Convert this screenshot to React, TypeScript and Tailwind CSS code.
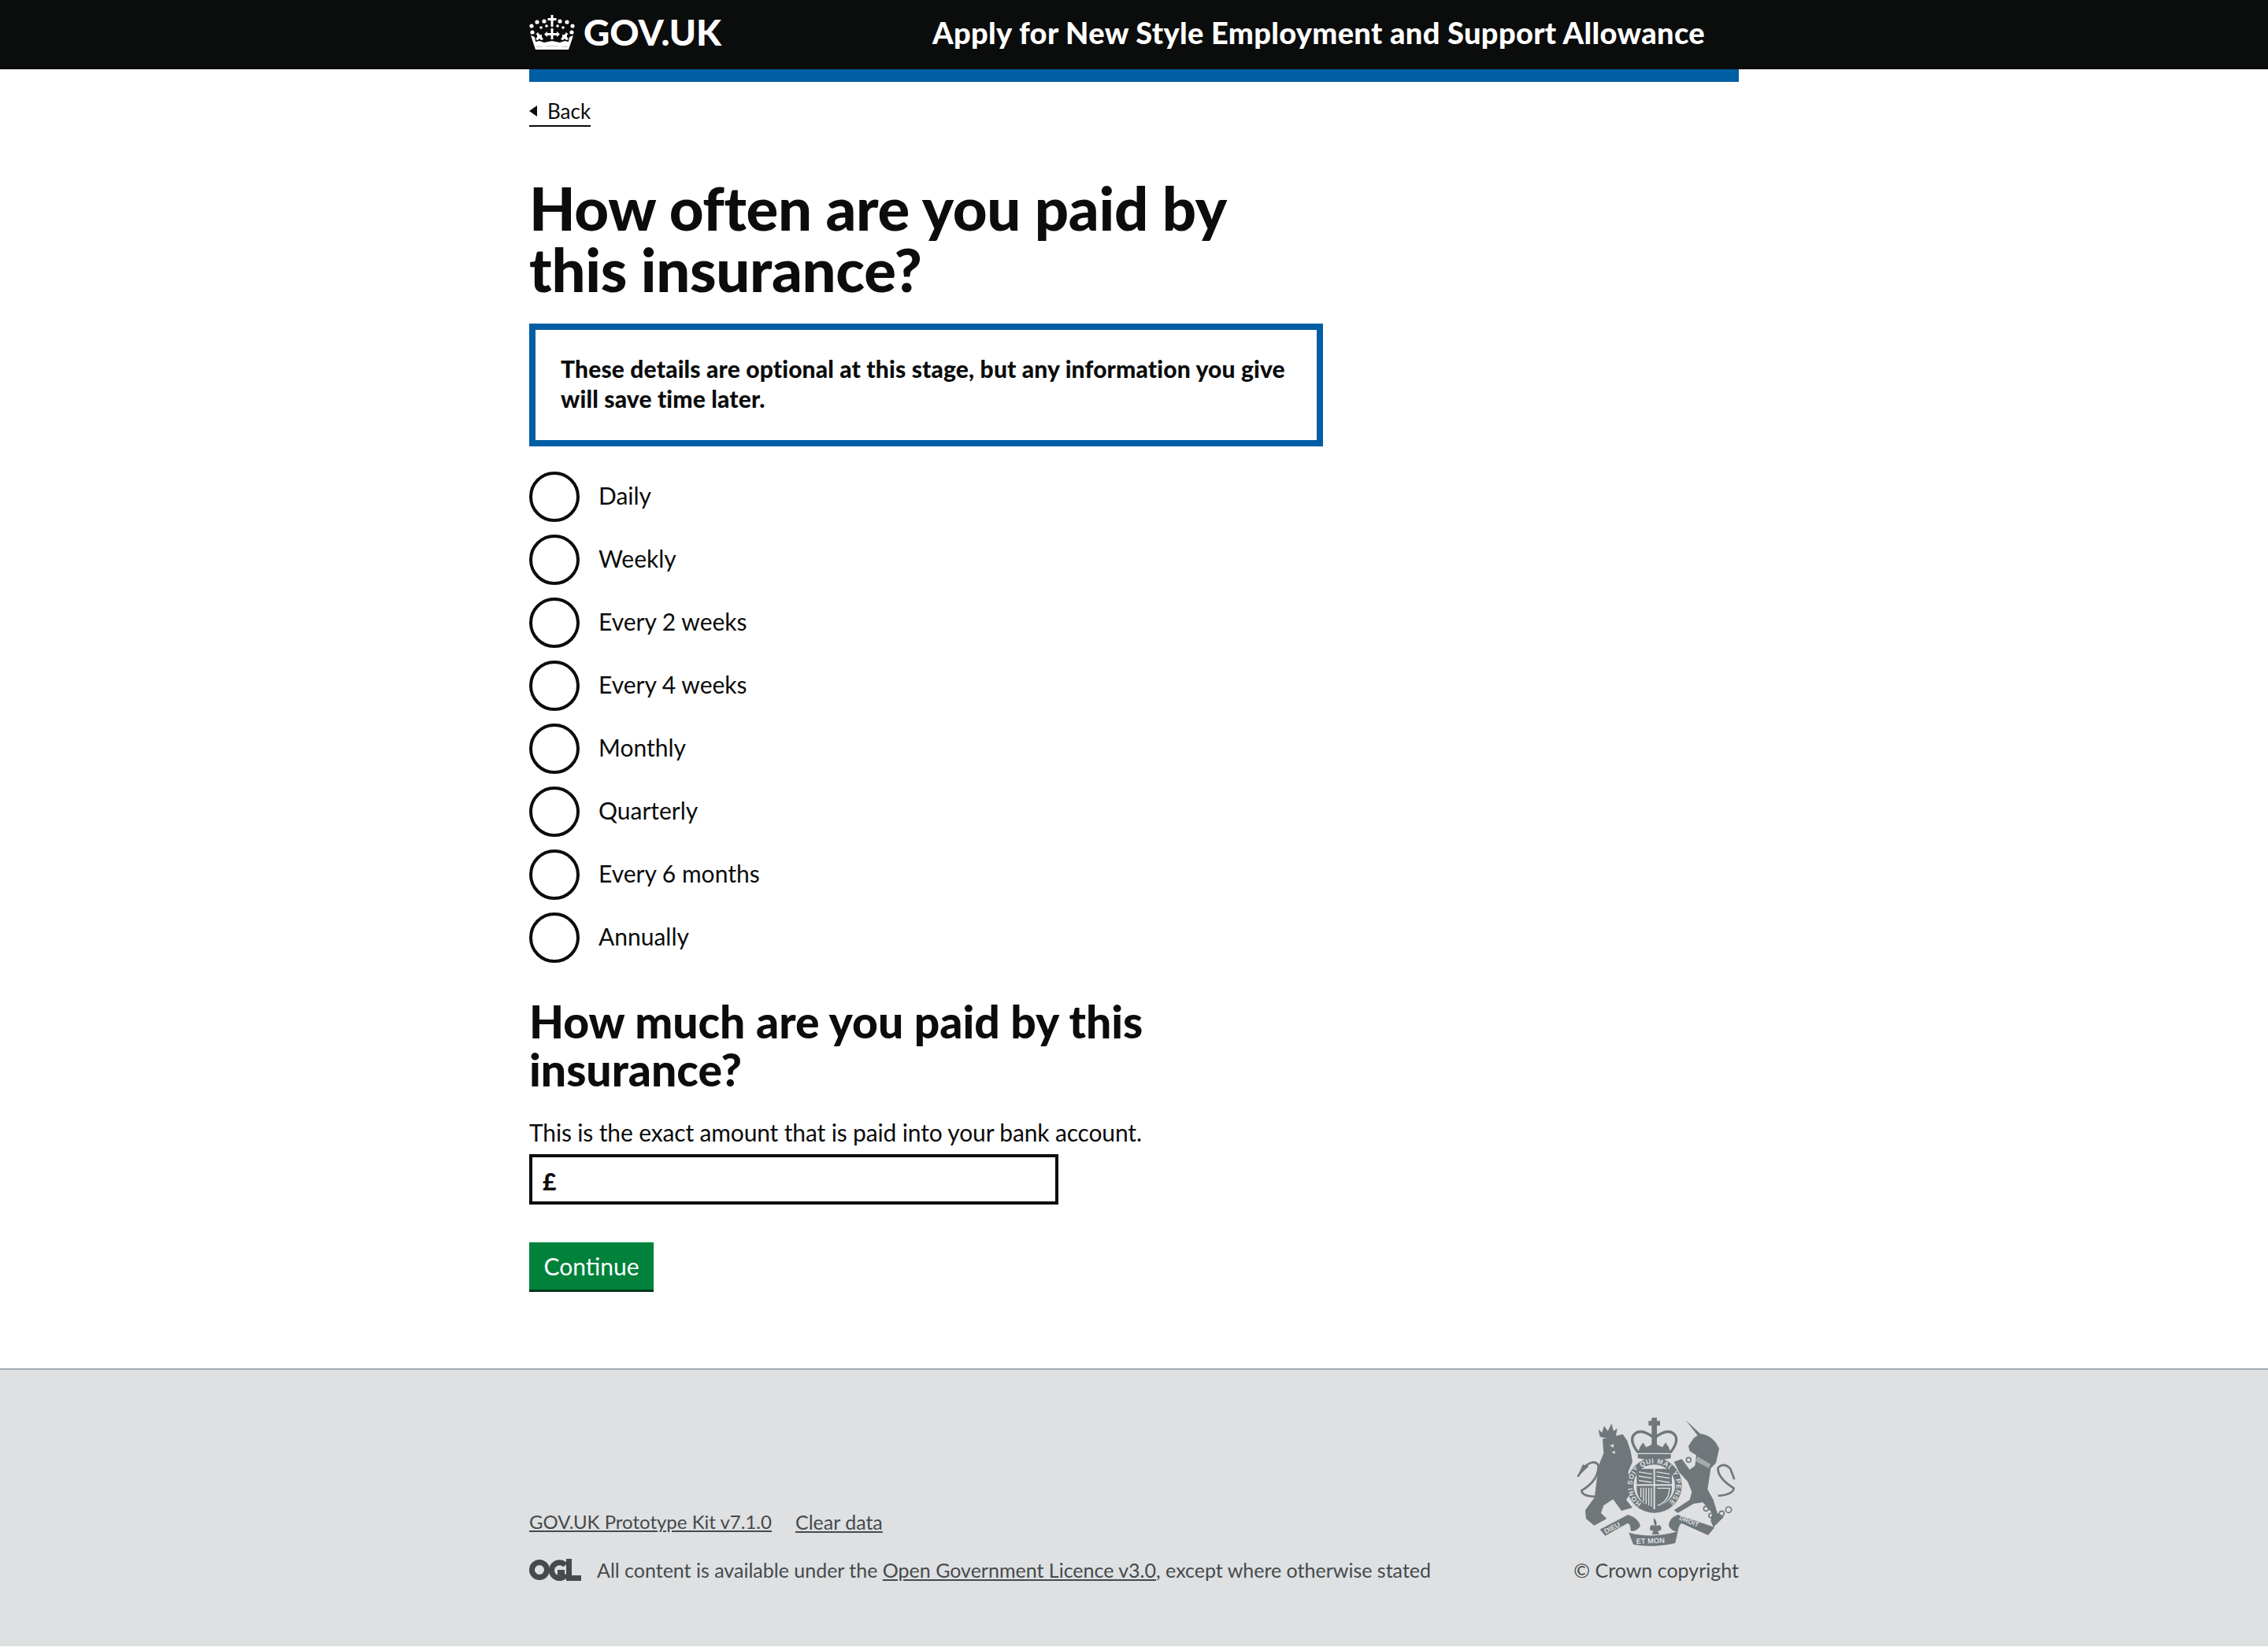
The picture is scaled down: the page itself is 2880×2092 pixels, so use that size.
import React from 'react';

const options = ['Daily', 'Weekly', 'Every 2 weeks', 'Every 4 weeks', 'Monthly', 'Quarterly', 'Every 6 months', 'Annually'];

function CrownLogo() {
  return (
    <svg viewBox="0 0 58 44" className="w-[58px] h-[44px] fill-white">
      <circle cx="3" cy="14" r="2.6" /><circle cx="10" cy="9" r="2.6" /><circle cx="19" cy="8" r="2.6" />
      <circle cx="39" cy="8" r="2.6" /><circle cx="48" cy="9" r="2.6" /><circle cx="55" cy="14" r="2.6" />
      <path d="M27.5 0h3v4h4v3h-4v8h-3V7h-4V4h4z" />
      <circle cx="22" cy="14" r="1.8" /><circle cx="36" cy="14" r="1.8" />
      <circle cx="4" cy="22" r="2.6" /><circle cx="54" cy="22" r="2.6" />
      <circle cx="15" cy="16" r="1.8" /><circle cx="43" cy="16" r="1.8" />
      <path d="M27.5 17h3v6h4.5v-2l4 3.500-4 3.500v-2h-4.500v5h-3v-5H23v2l-4-3.500 4-3.500v2h4.500z" />
      <path d="M11 22l2 3h3v3l2 3-3 1-2-2-2 2-3-1 2-3v-3h-2z" />
      <path d="M47 22l-2 3h-3v3l-2 3 3 1 2-2 2 2 3-1-2-3v-3h2z" />
      <path d="M2 26l5 2 1 6 5-1 6 2 10-2 10 2 6-2 5 1 1-6 5-2-5 15q-22-3-44 0z" />
      <path d="M7 41q22-3 44 0l-1 3H8z" />
    </svg>
  );
}

function Crest() {
  const c = '#6f777b';
  const bg = '#dee0e2';
  return (
    <svg viewBox="130 125 604 492" className="w-[202px] h-[164px]">
      {/* lion */}
      <path d="M228 208L305 190L322 215L335 255L342 295L325 335L345 400L318 440L342 470L300 482L268 438L232 462L222 490L244 512L196 538L165 512L162 480L198 430L205 370L215 305L232 262Z" fill={c} />
      <path d="M218 200L212 172L226 184L234 158L248 178L262 150L270 178L284 168L278 200Q248 210 218 200Z" fill={c} />
      <path d="M208 428Q150 428 148 405Q215 365 212 308Q195 282 155 318L134 352" fill="none" stroke={c} strokeWidth="8" />
      <path d="M132 354L152 306L176 312Z" fill={c} />
      <path d="M256 232l16-4-4 14zM262 258l14-4-2 12z" fill={bg} />

      {/* unicorn */}
      <path d="M545 137L600 188Q650 195 672 245L660 300L640 320L628 400L650 440L665 490L690 505L650 545L640 520L645 490L610 450L575 455L515 490L500 480L560 440L568 410L552 370L520 335L500 295L530 285L560 325L580 310L585 270L560 255L555 235L575 205L590 195Z" fill={c} />
      <path d="M668 425Q725 420 728 396Q664 355 668 318Q690 295 715 322L730 362" fill="none" stroke={c} strokeWidth="8" />
      <g fill="none" stroke={c} strokeWidth="5">
        <circle cx="708" cy="478" r="11" /><circle cx="682" cy="492" r="9" /><circle cx="642" cy="500" r="9" /><circle cx="622" cy="474" r="9" />
        <circle cx="556" cy="288" r="9" />
      </g>
      <path d="M590 275l50 30-8 14-50-26z" fill={bg} opacity="0.5" />
      <circle cx="640" cy="400" r="6" fill={bg} />
      <circle cx="650" cy="372" r="7" fill={bg} />

      {/* royal crown */}
      <path d="M415 127h20v12h12v18h-12v12h-20v-12h-12v-18h12z" fill={c} />
      <path d="M362 258Q332 218 345 195Q372 162 425 205Q478 162 505 195Q518 218 488 258" fill="none" stroke={c} strokeWidth="10" strokeLinecap="round" />
      <path d="M415 165h20v80h-20z" fill={c} />
      <path d="M362 262l8-22 12-18 12 18 16-8 15-12 15 12 16 8 12-18 12 18 8 22z" fill={c} />
      <path d="M362 266h126v16q-63 14-126 0z" fill={c} />

      {/* garter */}
      <circle cx="425" cy="385" r="105" fill={c} />
      <circle cx="425" cy="385" r="79" fill={bg} />
      <defs>
        <path id="garter" d="M377 454A84 84 0 1 1 473 454" />
      </defs>
      <text fill={bg} fontSize="26" fontFamily="'Liberation Sans', sans-serif" fontWeight="700" letterSpacing="2">
        <textPath href="#garter" startOffset="0">HONI SOIT QUI MAL Y PENSE</textPath>
      </text>

      {/* shield */}
      <path d="M358 322h134v80q-4 50-67 70-63-20-67-70z" fill={c} />
      <path d="M422 316h6v160h-6zM358 381h134v6H358z" fill={bg} />
      <g fill="none" stroke={bg} strokeWidth="4">
        <path d="M366 334l50 8M366 350l50 8M366 366l50 8" />
        <path d="M434 334l50 8M434 350l50 8M434 366l50 8" />
        <path d="M374 394v36M384 394v52M394 394v62M404 394v68M414 394v72" />
        <path d="M436 396h48l-6 28q-10 26-40 38" />
      </g>

      {/* ribbon */}
      <g fill={c}>
        <path d="M218 553L325 497Q365 510 372 540Q355 565 335 558Q335 530 322 530L238 577Z" />
        <path d="M655 545L515 497Q480 510 480 540Q495 565 515 560Q520 530 530 530L630 575Z" />
        <path d="M328 565Q420 590 515 560L505 605Q420 625 345 610Z" />
        <path d="M424 510q14 14 8 30 18-10 20 8 0 12-14 10l6 14h-28l6-14q-14 2-14-10 2-18 20-8-8-16-4-30z" />
      </g>
      <g fill={bg} fontFamily="'Liberation Sans', sans-serif" fontWeight="700">
        <text fontSize="27" transform="translate(240 570) rotate(-27)">DIEU</text>
        <text fontSize="28" x="356" y="606" transform="rotate(-2 420 600)">ET MON</text>
        <text fontSize="25" transform="translate(518 515) rotate(22)">DROIT</text>
      </g>
    </svg>
  );
}

function OglLogo() {
  return (
    <svg viewBox="0 0 66 28" className="w-[66px] h-[28px]">
      <circle cx="13" cy="14" r="9.500" fill="none" stroke="#454a4c" strokeWidth="7" />
      <path d="M46 8a10 10 0 1 0 1 12" fill="none" stroke="#454a4c" strokeWidth="7" />
      <path d="M36 14h9v7h-9z" fill="#454a4c" />
      <path d="M47 0h7v21h12v7H47z" fill="#454a4c" />
    </svg>
  );
}

export default function App() {
  return (
    <div className="min-h-[2092px] bg-white text-[#0b0c0c] font-['Lato',sans-serif]">
      <header className="bg-[#0b0c0c] h-[88px]">
        <div className="mx-auto w-[1536px] h-full flex items-center pb-[6px] text-white font-bold">
          <div className="w-[512px] flex items-center gap-[11px]">
            <CrownLogo />
            <span className="text-[46px] leading-[80px] font-black">GOV.UK</span>
          </div>
          <span className="text-[38px] leading-[80px] font-black tracking-[0.33px]">Apply for New Style Employment and Support Allowance</span>
        </div>
      </header>

      <main className="mx-auto w-[1536px] h-[1650px]">
        <div className="h-4 bg-[#005ea5]" />

        <a className="mt-[22px] inline-flex items-center gap-[13px] border-b-2 border-[#0b0c0c] text-[26px] leading-[30px] pb-[3px]">
          <span className="w-0 h-0 border-y-[7px] border-y-transparent border-r-[10px] border-r-[#0b0c0c]" />
          Back
        </a>

        <h1 className="mt-[64px] w-[1000px] text-[76px] leading-[78px] font-black tracking-[-0.3px]">
          How often are you paid by this insurance?
        </h1>

        <div className="mt-[30px] w-[1008px] h-[156px] border-[8px] border-[#005ea5] px-[32px] pt-[30px] text-[30px] leading-[38px] font-black tracking-[0.15px]">
          These details are optional at this stage, but any information you give will save time later.
        </div>

        <div className="mt-[32px] flex flex-col gap-[16px]">
          {options.map((opt) => (
            <label key={opt} className="flex items-center gap-[24px] h-[64px]">
              <span className="w-[64px] h-[64px] rounded-full border-4 border-[#0b0c0c]" />
              <span className="text-[30px] leading-[60px] -mt-[4px]">{opt}</span>
            </label>
          ))}
        </div>

        <h2 className="mt-[44px] w-[900px] text-[57px] leading-[61px] font-black">
          How much are you paid by this insurance?
        </h2>

        <p className="mt-[30px] text-[30px] leading-[38px] tracking-[-0.15px]">This is the exact amount that is paid into your bank account.</p>

        <div className="mt-[9px] w-[672px] h-[64px] border-4 border-[#0b0c0c] flex items-center pl-[13px] pt-[4px] text-[30px] font-black">£</div>

        <button className="mt-[48px] block h-[60px] w-[158px] bg-[#00823b] shadow-[0_3px_0_#003618] text-white text-[30px]">Continue</button>
      </main>

      <footer className="h-[353px] bg-[#dee0e2] border-t-2 border-[#a1acb2] text-[#454a4c] text-[25px]">
        <div className="mx-auto w-[1536px] flex items-end justify-between pt-[60px]">
          <div className="flex flex-col gap-[29px]">
            <div className="flex gap-[30px] leading-[32px] text-[24px]">
              <a className="underline">GOV.UK Prototype Kit v7.1.0</a>
              <a className="underline text-[25px]">Clear data</a>
            </div>
            <div className="flex items-center gap-[20px] leading-[32px]">
              <OglLogo />
              <span>All content is available under the <a className="underline">Open Government Licence v3.0</a>, except where otherwise stated</span>
            </div>
          </div>
          <div className="flex flex-col items-center gap-[14px]">
            <Crest />
            <span className="leading-[32px]">© Crown copyright</span>
          </div>
        </div>
      </footer>
    </div>
  );
}
